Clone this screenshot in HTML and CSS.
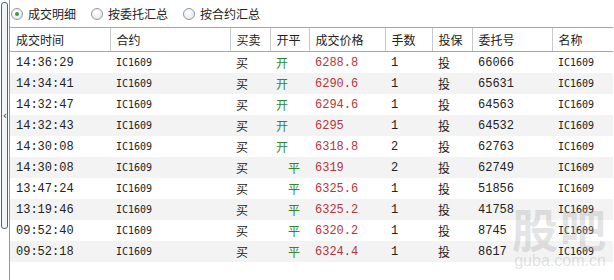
FILE: index.html
```html
<!DOCTYPE html>
<html lang="zh-CN">
<head>
    <meta charset="UTF-8">
    <title>成交明细</title>
    <link rel="stylesheet" href="styles.css">
</head>
<body>

    <div class="page">
        <!-- 左侧折叠条 -->
        <div class="side">
            <div class="side-bar"><span class="side-arrow">&lsaquo;</span></div>
        </div>

        <div class="main">
            <div class="tabs">
                <label class="tab"><span class="radio checked"></span>成交明细</label>
                <label class="tab"><span class="radio"></span>按委托汇总</label>
                <label class="tab"><span class="radio"></span>按合约汇总</label>
            </div>

            <table class="grid">
                <colgroup>
                    <col style="width:100px">
                    <col style="width:120px">
                    <col style="width:40px">
                    <col style="width:39px">
                    <col style="width:76px">
                    <col style="width:47px">
                    <col style="width:40px">
                    <col style="width:80px">
                    <col style="width:61px">
                </colgroup>
                <thead>
                    <tr>
                        <th>成交时间</th>
                        <th>合约</th>
                        <th>买卖</th>
                        <th>开平</th>
                        <th>成交价格</th>
                        <th>手数</th>
                        <th>投保</th>
                        <th>委托号</th>
                        <th>名称</th>
                    </tr>
                </thead>
                <tbody>
                    <tr><td class="num">14:36:29</td><td class="code">IC1609</td><td>买</td><td class="oc">开</td><td class="price">6288.8</td><td class="num">1</td><td>投</td><td class="num">66066</td><td class="code">IC1609</td></tr>
                    <tr><td class="num">14:34:41</td><td class="code">IC1609</td><td>买</td><td class="oc">开</td><td class="price">6290.6</td><td class="num">1</td><td>投</td><td class="num">65631</td><td class="code">IC1609</td></tr>
                    <tr><td class="num">14:32:47</td><td class="code">IC1609</td><td>买</td><td class="oc">开</td><td class="price">6294.6</td><td class="num">1</td><td>投</td><td class="num">64563</td><td class="code">IC1609</td></tr>
                    <tr><td class="num">14:32:43</td><td class="code">IC1609</td><td>买</td><td class="oc">开</td><td class="price">6295</td><td class="num">1</td><td>投</td><td class="num">64532</td><td class="code">IC1609</td></tr>
                    <tr><td class="num">14:30:08</td><td class="code">IC1609</td><td>买</td><td class="oc">开</td><td class="price">6318.8</td><td class="num">2</td><td>投</td><td class="num">62763</td><td class="code">IC1609</td></tr>
                    <tr><td class="num">14:30:08</td><td class="code">IC1609</td><td>买</td><td class="oc close">平</td><td class="price">6319</td><td class="num">2</td><td>投</td><td class="num">62749</td><td class="code">IC1609</td></tr>
                    <tr><td class="num">13:47:24</td><td class="code">IC1609</td><td>买</td><td class="oc close">平</td><td class="price">6325.6</td><td class="num">1</td><td>投</td><td class="num">51856</td><td class="code">IC1609</td></tr>
                    <tr><td class="num">13:19:46</td><td class="code">IC1609</td><td>买</td><td class="oc close">平</td><td class="price">6325.2</td><td class="num">1</td><td>投</td><td class="num">41758</td><td class="code">IC1609</td></tr>
                    <tr><td class="num">09:52:40</td><td class="code">IC1609</td><td>买</td><td class="oc close">平</td><td class="price">6320.2</td><td class="num">1</td><td>投</td><td class="num">8745</td><td class="code">IC1609</td></tr>
                    <tr><td class="num">09:52:18</td><td class="code">IC1609</td><td>买</td><td class="oc close">平</td><td class="price">6324.4</td><td class="num">1</td><td>投</td><td class="num">8617</td><td class="code">IC1609</td></tr>
                </tbody>
            </table>
        </div>
    </div>

    <!-- 水印 -->
    <div class="watermark">
        <div class="wm-big">股吧</div>
        <div class="wm-small">guba.com.cn</div>
    </div>

</body>
</html>
```

FILE: styles.css
```css
body {
    margin: 0;
    font-family: "Noto Sans CJK SC", "Liberation Sans", sans-serif;
    font-size: 12px;
    color: #222;
    background: #fff;
    width: 614px;
    height: 280px;
    overflow: hidden;
}

.page {
    display: flex;
    height: 280px;
}

.side {
    width: 10px;
    border-right: 1px solid #8c9aa6;
    padding: 2px 0 0 1px;
    box-sizing: border-box;
    flex: none;
}

.side-bar {
    width: 5px;
    height: 225px;
    border: 1px solid #4f6472;
    border-radius: 3px;
    background: #f2f5f7;
    display: flex;
    align-items: center;
    justify-content: center;
}

.side-arrow {
    font-family: "DejaVu Sans", sans-serif;
    font-size: 11px;
    color: #333;
    line-height: 1;
    margin-left: 1px;
}

.main {
    flex: 1;
}

.tabs {
    display: flex;
    height: 27px;
    align-items: center;
    padding-left: 1px;
}

.tab {
    display: flex;
    align-items: center;
    line-height: 12px;
    margin-right: 15px;
}

.radio {
    width: 10px;
    height: 10px;
    border: 1px solid #8d98a3;
    border-radius: 50%;
    background: radial-gradient(circle at 40% 35%, #ffffff, #dfe3e8);
    margin-right: 5px;
    display: flex;
    align-items: center;
    justify-content: center;
}

.radio.checked::after {
    content: "";
    width: 4px;
    height: 4px;
    border-radius: 50%;
    background: #3d9a3d;
}

.grid {
    border-collapse: collapse;
    table-layout: fixed;
    width: 603px;
}

.grid th {
    height: 23px;
    padding: 0 0 0 6px;
    text-align: left;
    font-weight: normal;
    border-top: 1px solid #a3a8ad;
    border-bottom: 1px solid #a3a8ad;
    border-left: 1px solid #c6cacd;
    background: #fff;
}

.grid th:first-child {
    border-left: none;
}

.grid td {
    height: 21px;
    padding: 0 0 0 6px;
    white-space: nowrap;
}

.grid tbody tr:nth-child(even) td {
    background: #f3f3f3;
}

.num, .price {
    font-family: "Liberation Mono", monospace;
    font-size: 12px;
}

.code {
    font-family: "DejaVu Sans Mono", monospace;
    font-size: 10px;
}

.price {
    color: #b5353c;
}

.oc {
    color: #2f8a2f;
}

.oc.close {
    padding-left: 18px !important;
}

.watermark {
    position: absolute;
    right: 2px;
    top: 203px;
    width: 104px;
    text-align: center;
    color: rgba(160, 160, 160, 0.3);
    pointer-events: none;
}

.wm-big {
    font-size: 46px;
    font-weight: bold;
    line-height: 48px;
    letter-spacing: 2px;
}

.wm-small {
    font-family: "Liberation Sans", sans-serif;
    font-size: 16px;
    line-height: 20px;
}
```
